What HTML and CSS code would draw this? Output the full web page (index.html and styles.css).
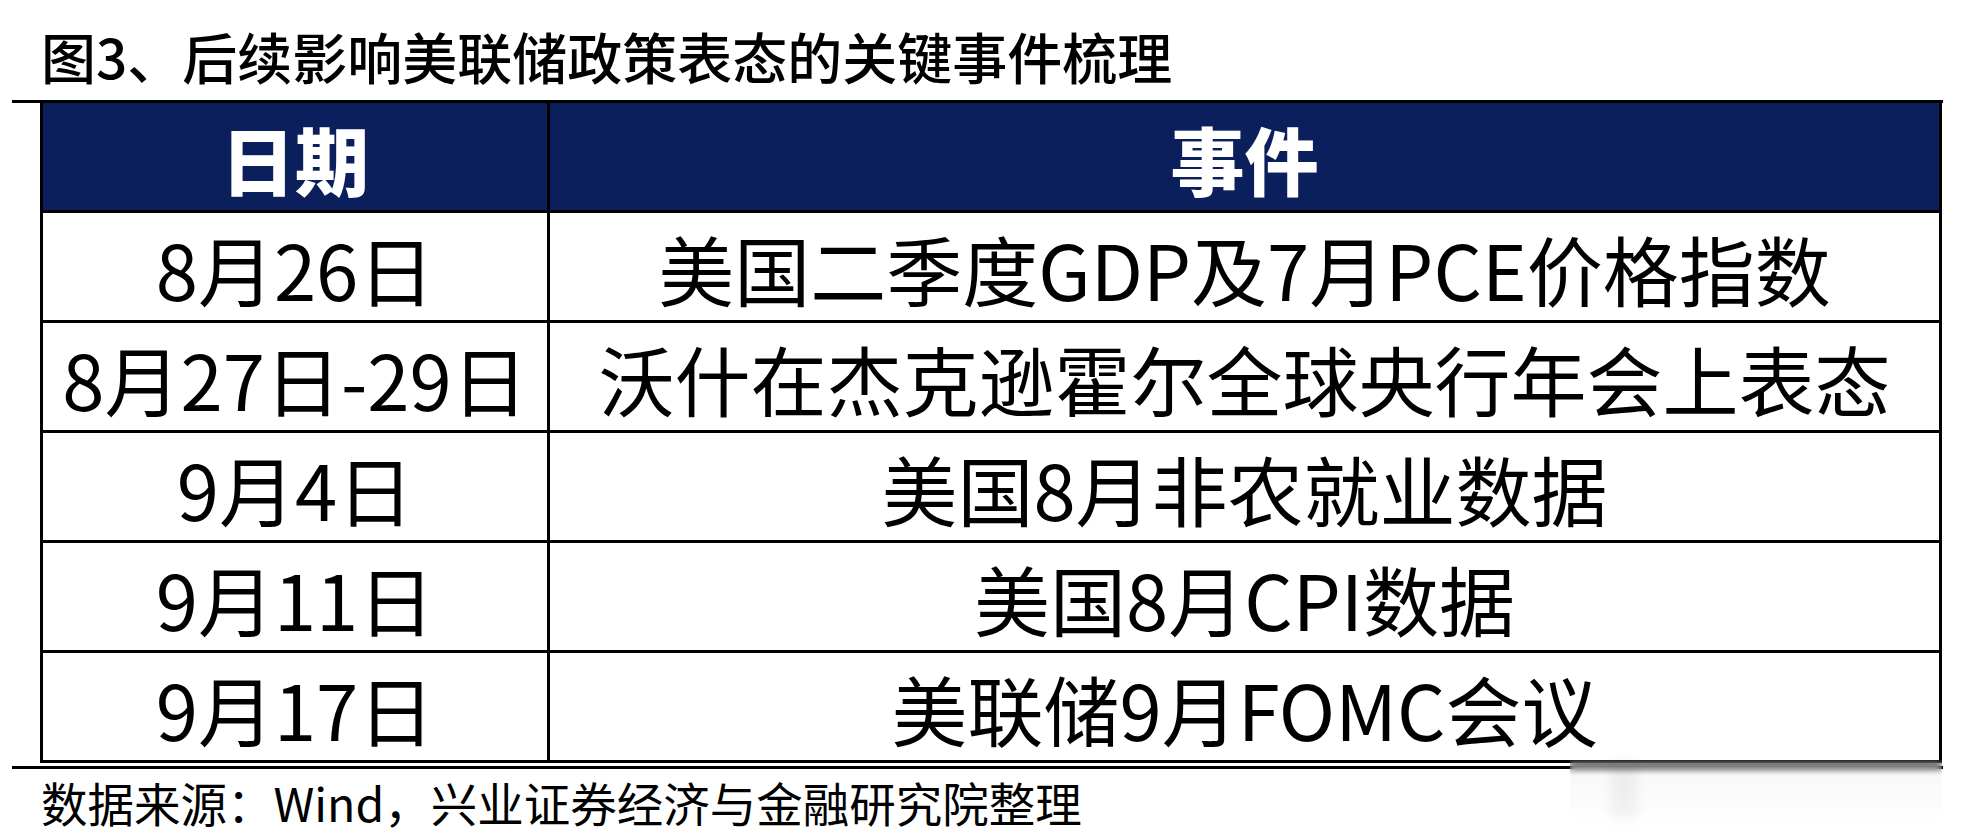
FILE: index.html
```html
<!DOCTYPE html>
<html lang="zh-CN">
<head>
<meta charset="utf-8">
<title>图3、后续影响美联储政策表态的关键事件梳理</title>
<link rel="stylesheet" href="styles.css">
</head>
<body>
<div class="page">
  <h1 class="title">图3、后续影响美联储政策表态的关键事件梳理</h1>
  <div class="rule rule-top"></div>
  <div class="table">
    <div class="cell head">日期</div>
    <div class="cell head">事件</div>
    <div class="cell">8月26日</div>
    <div class="cell">美国二季度GDP及7月PCE价格指数</div>
    <div class="cell">8月27日-29日</div>
    <div class="cell">沃什在杰克逊霍尔全球央行年会上表态</div>
    <div class="cell">9月4日</div>
    <div class="cell">美国8月非农就业数据</div>
    <div class="cell">9月11日</div>
    <div class="cell">美国8月CPI数据</div>
    <div class="cell">9月17日</div>
    <div class="cell">美联储9月FOMC会议</div>
  </div>
  <div class="rule rule-bottom"></div>
  <p class="source">数据来源：Wind，兴业证券经济与金融研究院整理</p>
  <div class="watermark"><span class="wm-blob"></span></div>
</div>
</body>
</html>
```

FILE: styles.css
```css
html, body {
  margin: 0;
  padding: 0;
  background: #ffffff;
}

.page {
  position: relative;
  width: 1968px;
  height: 839px;
  padding-top: 28px;
  box-sizing: border-box;
  font-family: "Noto Sans CJK SC", "Noto Sans", sans-serif;
  color: #000;
}

.title {
  margin: 0 0 18px 41px;
  font-size: 55px;
  line-height: 54px;
  height: 54px;
  font-weight: 500;
  white-space: nowrap;
}

.rule {
  margin-left: 12px;
  width: 1931px;
  background: #000;
}

.rule-top {
  height: 3px;
}

.table {
  display: grid;
  grid-template-columns: 507px 1392px;
  grid-auto-rows: 110px;
  margin-left: 40px;
  width: 1899px;
  border-left: 3px solid #000;
  box-sizing: border-box;
}

.cell {
  display: flex;
  align-items: center;
  justify-content: center;
  box-sizing: border-box;
  border-right: 3px solid #000;
  border-bottom: 3px solid #000;
  font-size: 76px;
  line-height: 1;
  white-space: nowrap;
  padding-top: 2px;
}

.head {
  background: #0b1f5c;
  color: #fff;
  font-size: 74px;
  font-weight: 900;
}

.rule-bottom {
  height: 3px;
  margin-top: 3px;
}

.source {
  margin: 10px 0 0 41px;
  font-size: 46.5px;
  line-height: 46px;
  font-weight: 400;
  white-space: nowrap;
}

.watermark {
  position: absolute;
  left: 1570px;
  top: 760px;
  width: 372px;
  height: 62px;
  backdrop-filter: blur(3px);
  background: linear-gradient(to bottom, rgba(0,0,0,0.03), rgba(0,0,0,0.015) 60%, rgba(0,0,0,0));
}

.wm-blob {
  position: absolute;
  left: 40px;
  top: 2px;
  width: 28px;
  height: 56px;
  background: rgba(0,0,0,0.05);
  filter: blur(6px);
}
```
